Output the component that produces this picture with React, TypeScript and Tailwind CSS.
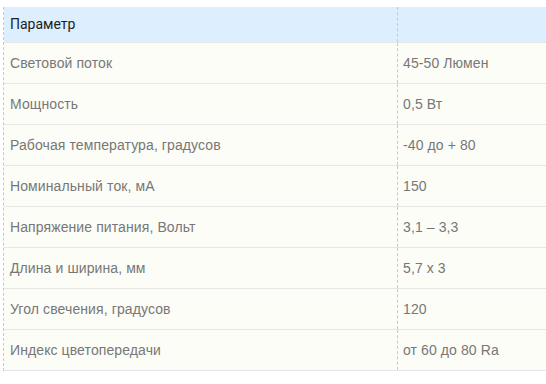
import React from 'react';

const rows = [
  ["Световой поток", "45-50 Люмен"],
  ["Мощность", "0,5 Вт"],
  ["Рабочая температура, градусов", "-40 до + 80"],
  ["Номинальный ток, мА", "150"],
  ["Напряжение питания, Вольт", "3,1 – 3,3"],
  ["Длина и ширина, мм", "5,7 х 3"],
  ["Угол свечения, градусов", "120"],
  ["Индекс цветопередачи", "от 60 до 80 Ra"],
];

const App: React.FC = () => {
  return (
    <div className="w-[546px] h-[384px] bg-white pt-[7px] pl-[3px] overflow-hidden">
      <div className="border-l border-dashed border-[#c8c8c8]">
        <div className="grid grid-cols-[393px_1fr] h-[36px] bg-[#ddeeff] border-b border-[#e6e6e6]">
          <div className="pl-[6px] flex items-center text-[14px] text-[#1e1e1e] font-['Roboto',sans-serif]">
            Параметр
          </div>
          <div className="border-l border-dashed border-[#c8c8c8]" />
        </div>
        {rows.map((row, index) => (
          <div
            key={index}
            className="grid grid-cols-[393px_1fr] h-[41px] bg-[#fcfdf7] border-b border-[#e6e6e6] text-[14px] tracking-[0.1px] text-[#777777] font-['Liberation_Sans',Arial,sans-serif]"
          >
            <div className="pl-[6px] flex items-center">{row[0]}</div>
            <div className="pl-[5px] flex items-center border-l border-dashed border-[#c8c8c8]">{row[1]}</div>
          </div>
        ))}
      </div>
    </div>
  );
};

export default App;
